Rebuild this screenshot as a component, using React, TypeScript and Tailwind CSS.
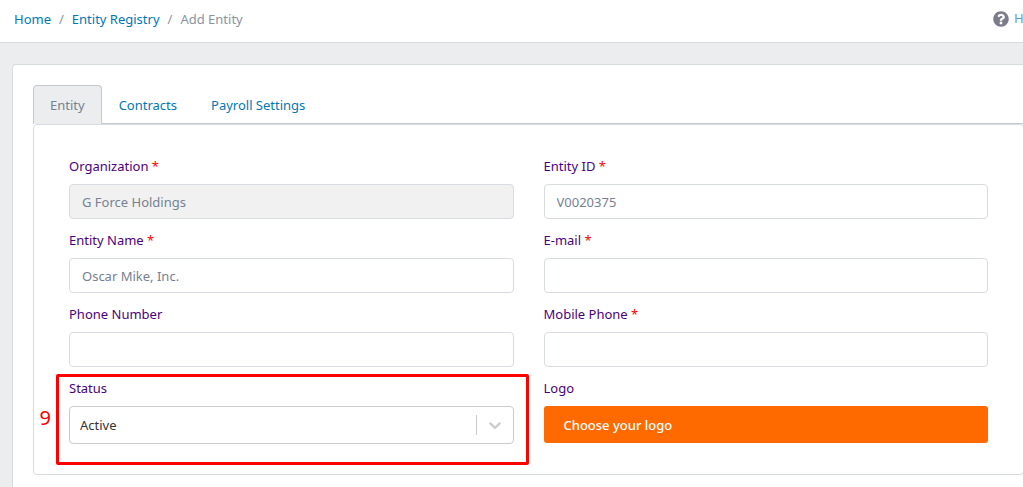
import { useState } from 'react';
import { FaQuestionCircle } from 'react-icons/fa';

const tabs = ['Entity', 'Contracts', 'Payroll Settings'];

interface LabelProps {
  id: string;
  label: string;
  required?: boolean;
}

interface TextFieldProps extends LabelProps {
  initialValue?: string;
  type?: string;
  disabled?: boolean;
}

function FieldLabel({ id, label, required }: LabelProps) {
  return (
    <label htmlFor={id} className="mb-2 block leading-5 text-[#4b0082]">
      {label}
      {required && <span className="text-[#ff0000]"> *</span>}
    </label>
  );
}

function TextField({ id, label, required, initialValue = '', type = 'text', disabled }: TextFieldProps) {
  const [value, setValue] = useState(initialValue);

  return (
    <div>
      <FieldLabel id={id} label={label} required={required} />
      <input
        id={id}
        type={type}
        value={value}
        required={required}
        disabled={disabled}
        onChange={(e) => setValue(e.target.value)}
        className="block h-[35px] w-full rounded border border-[#d8dbe0] bg-white px-3 text-[#768192] outline-none focus:border-[#0072b8] disabled:bg-[#f1f1f1]"
      />
    </div>
  );
}

function StatusField() {
  const [status, setStatus] = useState('Active');

  return (
    <div className="relative">
      <FieldLabel id="status" label="Status" />
      <div className="relative">
        <select
          id="status"
          value={status}
          onChange={(e) => setStatus(e.target.value)}
          className="block h-[38px] w-full appearance-none rounded border border-[#cccccc] bg-white px-[10px] pt-[2px] text-[#333333] outline-none"
        >
          <option>Active</option>
          <option>Inactive</option>
        </select>
        <div className="pointer-events-none absolute inset-y-0 right-px flex items-center">
          <span className="h-5 w-px bg-[#cccccc]" />
          <svg className="mx-2 h-5 w-5" viewBox="0 0 20 20" fill="#cccccc">
            <path d="M4.516 7.548c0.436-0.446 1.043-0.481 1.576 0l3.908 3.747 3.908-3.747c0.533-0.481 1.141-0.446 1.574 0 0.436 0.445 0.408 1.197 0 1.615-0.406 0.418-4.695 4.502-4.695 4.502-0.217 0.223-0.502 0.335-0.787 0.335s-0.57-0.112-0.789-0.335c0 0-4.287-4.084-4.695-4.502s-0.436-1.17 0-1.615z" />
          </svg>
        </div>
      </div>
      <div className="pointer-events-none absolute -top-1 -right-[15px] -bottom-[21px] -left-[13px] rounded-xs border-3 border-[#ff0000]">
        <span className="absolute inset-y-0 right-full mr-2 flex items-center pb-1 text-xl text-[#ff0000]">9</span>
      </div>
    </div>
  );
}

export default function App() {
  const [activeTab, setActiveTab] = useState(tabs[0]);

  return (
    <div className="flex min-h-screen flex-col overflow-hidden bg-[#ebedef] font-['Noto_Sans','Segoe_UI',sans-serif] text-[13px]">
      <header className="flex h-[43px] justify-between border-b border-[#d8dbe0] bg-white pt-[9px] pl-[14px]">
        <nav aria-label="Breadcrumb">
          <ol className="flex gap-2 leading-5 text-[#8a93a2]">
            <li>
              <a href="#home" className="text-[#0078b8]">Home</a>
            </li>
            <li aria-hidden="true">/</li>
            <li>
              <a href="#registry" className="text-[#0078b8]">Entity Registry</a>
            </li>
            <li aria-hidden="true">/</li>
            <li aria-current="page">Add Entity</li>
          </ol>
        </nav>
        <a href="#help" className="flex h-5 w-[30px] items-center gap-[5px] text-[#5ba3cf]">
          <FaQuestionCircle className="h-4 w-4 shrink-0 text-[#7b7b8b]" />
          <span>H</span>
        </a>
      </header>

      <main className="flex flex-1 flex-col pt-[21px] pl-3">
        <div className="flex-1 rounded-tl border-t border-l border-[#d8dbe0] bg-white pt-5 pb-3 pl-5">
          <div role="tablist" className="flex border-b border-[#c4c9d0]">
            {tabs.map((tab) => (
              <button
                key={tab}
                type="button"
                role="tab"
                aria-selected={tab === activeTab}
                onClick={() => setActiveTab(tab)}
                className={`-mb-px rounded-t border px-4 pt-[9px] pb-[7px] leading-[21px] ${
                  tab === activeTab
                    ? 'border-[#c4c9d0] border-b-[#ebedef] bg-[#ebedef] text-[#768192]'
                    : 'border-transparent text-[#0078b8]'
                }`}
              >
                {tab}
              </button>
            ))}
          </div>

          <form className="-mr-px grid grid-cols-2 gap-x-[30px] gap-y-[11px] rounded border border-[#d8dbe0] px-[35px] pt-[31px] pb-[30px]">
            <TextField id="organization" label="Organization" required disabled initialValue="G Force Holdings" />
            <TextField id="entity-id" label="Entity ID" required initialValue="V0020375" />
            <TextField id="entity-name" label="Entity Name" required initialValue="Oscar Mike, Inc." />
            <TextField id="email" label="E-mail" type="email" required />
            <TextField id="phone" label="Phone Number" type="tel" />
            <TextField id="mobile" label="Mobile Phone" type="tel" required />
            <StatusField />
            <div>
              <FieldLabel id="logo" label="Logo" />
              <button
                id="logo"
                type="button"
                className="block h-[37px] w-full rounded-[3px] bg-[#ff6a00] px-5 pt-[2px] text-left font-medium text-white"
              >
                Choose your logo
              </button>
            </div>
          </form>
        </div>
      </main>
    </div>
  );
}
